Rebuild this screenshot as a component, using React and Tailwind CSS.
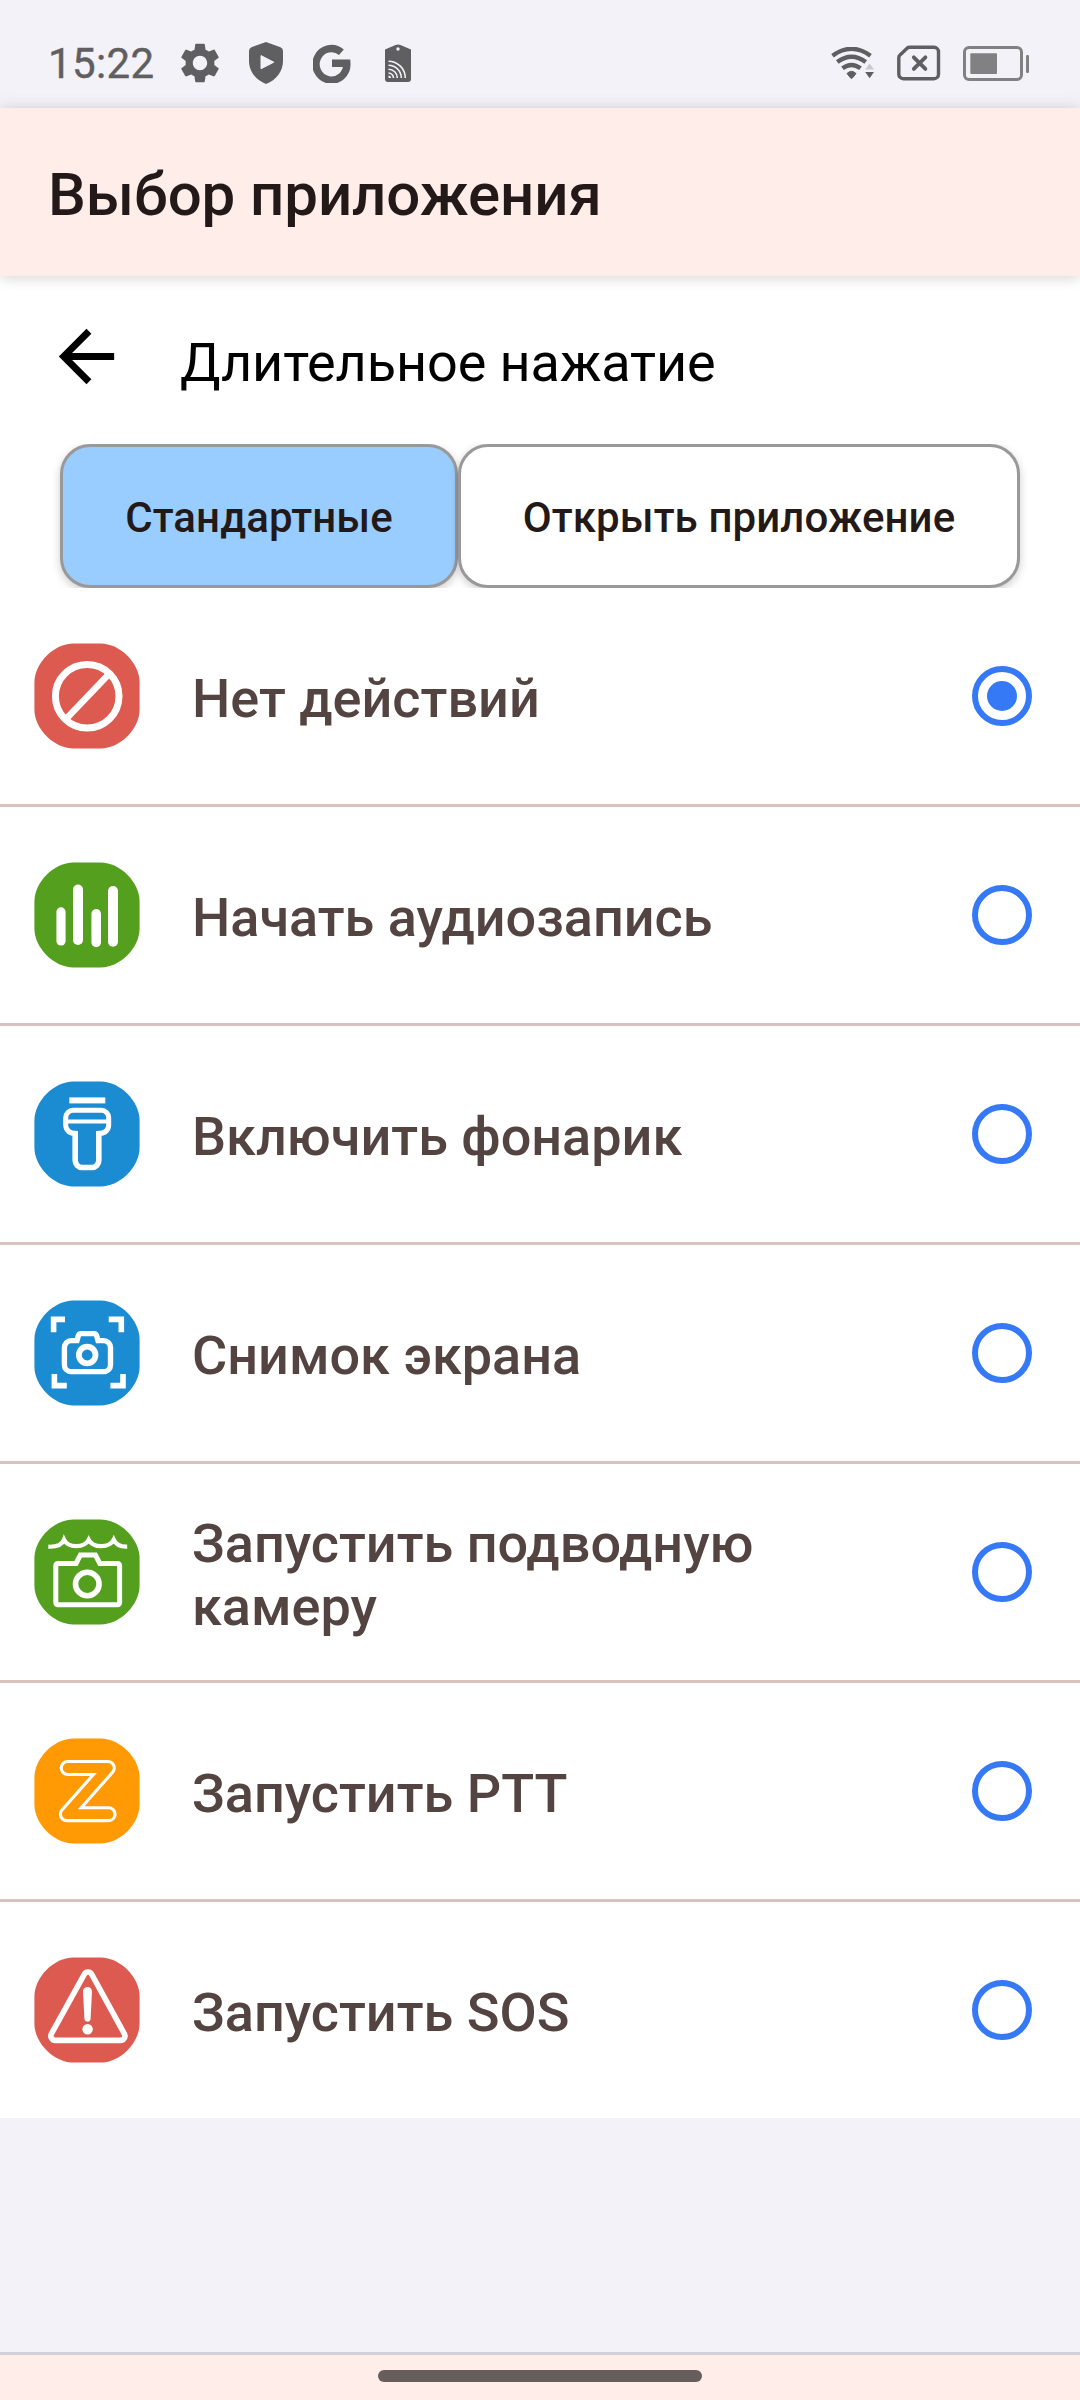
import React, { useState } from 'react';

const ACTIONS = [
  { id: 'none', label: 'Нет действий', icon: NoActionIcon },
  { id: 'audio', label: 'Начать аудиозапись', icon: AudioIcon },
  { id: 'torch', label: 'Включить фонарик', icon: TorchIcon },
  { id: 'screenshot', label: 'Снимок экрана', icon: ScreenshotIcon },
  { id: 'underwater', label: 'Запустить подводную камеру', icon: UnderwaterIcon },
  { id: 'ptt', label: 'Запустить PTT', icon: PttIcon },
  { id: 'sos', label: 'Запустить SOS', icon: SosIcon },
];

const TABS = [
  { id: 'standard', label: 'Стандартные' },
  { id: 'app', label: 'Открыть приложение' },
];

function Tile({ color, children }) {
  return (
    <svg viewBox="0 0 106 106" className="w-[106px] h-[106px] shrink-0" fill="none">
      <path
        d="M39.4.4h27.2C86 .4 105.6 20 105.6 39.4v27.2c0 19.4-19.6 39-39 39H39.4C20 105.6.4 86 .4 66.6V39.4C.4 20 20 .4 39.4.4z"
        fill={color}
      />
      {children}
    </svg>
  );
}

function NoActionIcon() {
  return (
    <Tile color="#dd5a50">
      <g stroke="#fff" strokeWidth="7">
        <circle cx="53.2" cy="53.2" r="31.8" />
        <path d="M75 31L32 76" strokeWidth="6.5" />
      </g>
    </Tile>
  );
}

function AudioIcon() {
  return (
    <Tile color="#549f1e">
      <g fill="#fff">
        <rect x="22.4" y="45.3" width="9.2" height="38.2" rx="4.6" />
        <rect x="39" y="22.5" width="10" height="60.5" rx="5" />
        <rect x="57.4" y="47" width="9.6" height="38.2" rx="4.8" />
        <rect x="74" y="24" width="10" height="60.8" rx="5" />
      </g>
    </Tile>
  );
}

function TorchIcon() {
  return (
    <Tile color="#1b8bd2">
      <rect x="35.3" y="16.4" width="36" height="6" fill="#fff" />
      <g stroke="#fff" strokeWidth="5">
        <path d="M42.5 52.3H40a8.3 8.3 0 0 1-8.3-8.3v-7.3a7.5 7.5 0 0 1 7.5-7.5h28a7.5 7.5 0 0 1 7.5 7.5V44a8.3 8.3 0 0 1-8.3 8.3h-2.6" />
        <path d="M31.5 40.4h43.5" strokeWidth="4" />
        <path d="M41.2 50v29.5a7 7 0 0 0 7 7h9.6a7 7 0 0 0 7-7V50" strokeWidth="5.6" />
      </g>
    </Tile>
  );
}

function ScreenshotIcon() {
  return (
    <Tile color="#1b8bd2">
      <g stroke="#fff" strokeWidth="5.6">
        <path d="M19.6 32.3V19.4H31M74.7 19.4h12.6v12.9M20.4 74v11.6h12.4M76.4 85.6H89V74" />
        <path
          d="M43 40.6l1.4-5c.4-1.4 1-2 2.4-2h13.4c1.4 0 2 .6 2.4 2l1.4 5h5.5a7 7 0 0 1 7 7V65a6.6 6.6 0 0 1-6.6 6.6H37A6.6 6.6 0 0 1 30.4 65V47.6a7 7 0 0 1 7-7z"
          strokeWidth="5.4"
        />
        <circle cx="53.2" cy="55" r="8.3" strokeWidth="5.8" />
      </g>
    </Tile>
  );
}

function UnderwaterIcon() {
  return (
    <Tile color="#549f1e">
      <g stroke="#fff">
        <path
          d="M14.3 27.7C22 28 28 26 30 20.7C34 29.3 50.5 29.3 54.7 20.7C59 29.3 75.5 29.3 79.7 20.7C82 26 86 28 93.2 27.7"
          strokeWidth="4.2"
        />
        <path
          d="M42 44.5l4.4-8.5h15l4.4 8.5H83.6a2 2 0 0 1 2 2v37.3a2 2 0 0 1-2 2H23.8a2 2 0 0 1-2-2V46.5a2 2 0 0 1 2-2z"
          strokeWidth="5"
        />
        <circle cx="53.3" cy="65" r="11.8" strokeWidth="5.6" />
      </g>
    </Tile>
  );
}

function PttIcon() {
  return (
    <Tile color="#ff9a05">
      <g strokeLinecap="round" strokeLinejoin="round">
        <path d="M33.7 30H73.8L32.8 76.2H74.6" stroke="#fff" strokeWidth="16" />
        <path d="M33.7 30H73.8L32.8 76.2H74.6" stroke="#ff9a05" strokeWidth="9.8" />
      </g>
    </Tile>
  );
}

function SosIcon() {
  return (
    <Tile color="#dd5a50">
      <path
        d="M50.3 17.3a4.1 4.1 0 0 1 7.4 0L90.4 76.8a4.5 4.5 0 0 1-4 6.6H21.4a4.5 4.5 0 0 1-4-6.6z"
        stroke="#fff"
        strokeWidth="5.6"
      />
      <path d="M49 34.5a4.5 4.5 0 0 1 9 0L56.6 61.5a3.1 3.1 0 0 1-6.2 0z" fill="#fff" />
      <circle cx="53.6" cy="72.2" r="5.2" fill="#fff" />
    </Tile>
  );
}

function StatusBar() {
  return (
    <div className="h-[108px] pt-[39px] pl-[48px] pr-[50px] flex items-start justify-between text-[#5f5f61]">
      <div className="flex items-center h-12">
        <span className="text-[42px] leading-[48px] tracking-[0.4px] w-[129px] translate-y-px [-webkit-text-stroke:0.4px]">15:22</span>
        {/* Settings */}
        <svg viewBox="2 2 20 20" className="w-[40px] h-[40px] ml-[3px]" fill="currentColor">
          <path d="M19.14 12.94c.04-.3.06-.61.06-.94 0-.32-.02-.64-.07-.94l2.03-1.58c.18-.14.23-.41.12-.61l-1.92-3.32c-.12-.22-.37-.29-.59-.22l-2.39.96c-.5-.38-1.03-.7-1.62-.94l-.36-2.54c-.04-.24-.24-.41-.48-.41h-3.84c-.24 0-.43.17-.47.41l-.36 2.54c-.59.24-1.13.57-1.62.94l-2.39-.96c-.22-.08-.47 0-.59.22L2.74 8.87c-.12.21-.08.47.12.61l2.03 1.58c-.05.3-.09.63-.09.94s.02.64.07.94l-2.03 1.58c-.18.14-.23.41-.12.61l1.92 3.32c.12.22.37.29.59.22l2.39-.96c.5.38 1.03.7 1.62.94l.36 2.54c.05.24.24.41.48.41h3.84c.24 0 .44-.17.47-.41l.36-2.54c.59-.24 1.13-.56 1.62-.94l2.39.96c.22.08.47 0 .59-.22l1.92-3.32c.12-.22.07-.47-.12-.61l-2.01-1.58zM12 15.6c-1.98 0-3.6-1.62-3.6-3.6s1.62-3.6 3.6-3.6 3.6 1.62 3.6 3.6-1.62 3.6-3.6 3.6z" />
        </svg>
        {/* Play Protect */}
        <svg viewBox="0 0 34 42" className="w-[34px] h-[42px] ml-[29px]">
          <path d="M17 0l14.5 5.2Q34 6.2 34 8.7V19C34 29 27.5 38 17 42 6.5 38 0 29 0 19V8.7Q0 6.2 2.5 5.2z" fill="currentColor" />
          <path d="M12 13.6v13.2l12.8-6.6z" fill="#f3f2f9" stroke="#f3f2f9" strokeLinejoin="round" />
        </svg>
        {/* Google */}
        <svg viewBox="0 0 38 39" className="w-[38px] h-[39px] ml-[30px]" fill="none" stroke="currentColor" strokeWidth="7.4">
          <path d="M28.4 8.3A15.4 15.8 0 1 0 33.8 19.3H19" />
        </svg>
        {/* NFC tag */}
        <svg viewBox="0 0 26 38" className="w-[26px] h-[38px] ml-[34px]" fill="none">
          <path d="M0 5.5L10.5 1.1q2.5-1.3 5 0L26 5.5V35a3 3 0 0 1-3 3H3a3 3 0 0 1-3-3z" fill="currentColor" />
          <circle cx="13" cy="5" r="1.7" fill="#f3f2f9" />
          <path
            d="M3.5 17.2a16.8 16.8 0 0 1 16.8 16.8M3.5 21.2a12.8 12.8 0 0 1 12.8 12.8M3.5 25.2a8.8 8.8 0 0 1 8.8 8.8M3.5 29a5 5 0 0 1 5 5"
            stroke="#f3f2f9"
            strokeWidth="1.6"
          />
          <path d="M3.5 34v-2.5a2.5 2.5 0 0 1 2.5 2.5z" fill="#f3f2f9" />
        </svg>
      </div>

      <div className="flex items-center h-12">
        {/* Wi-Fi with traffic arrows */}
        <svg viewBox="0 0 44 32" className="w-[44px] h-[32px]" fill="none">
          <g stroke="currentColor" strokeWidth="4.4">
            <path d="M1.5 8.7Q20.5-5 39.5 8.7" />
            <path d="M6.3 15.1Q20.5 4.5 34.7 15.1" />
            <path d="M11.5 21.3Q20.5 14.5 29.5 21.3" />
          </g>
          <path d="M16 26.5Q20.5 22.2 25 26.5L21.4 31q-.9.8-1.8 0z" fill="currentColor" stroke="currentColor" />
          <path d="M38.6 16.5l4.4 6h-8.8z" fill="#c9c8ce" />
          <path d="M34.2 25h8.8l-4.4 6.3z" fill="currentColor" />
        </svg>
        {/* Missing SIM */}
        <svg viewBox="0 0 44 36" className="w-[44px] h-[36px] ml-[22px]" fill="none" stroke="currentColor" strokeWidth="3.4">
          <path d="M12.5 2.3H37a4.5 4.5 0 0 1 4.5 4.5v22.4a4.5 4.5 0 0 1-4.5 4.5H6.3a4.5 4.5 0 0 1-4.5-4.5V12.5q0-1.3 1-2.2l7.3-7q1-1 2.4-1z" />
          <path d="M16.8 12.3l11.6 11.6m0-11.6L16.8 23.9" strokeWidth="3.8" strokeLinecap="round" />
        </svg>
        {/* Battery */}
        <svg viewBox="0 0 67 35" className="w-[67px] h-[35px] ml-[22px]" fill="none">
          <rect x="1.5" y="1.5" width="57" height="32" rx="4.5" stroke="#818183" strokeWidth="3" />
          <rect x="7.3" y="7.3" width="26.7" height="20.7" rx="1" fill="#818183" />
          <rect x="63" y="9" width="3" height="18" rx="1.2" fill="#818183" />
        </svg>
      </div>
    </div>
  );
}

function Radio({ checked }) {
  return (
    <span className="w-[60px] h-[60px] rounded-full border-[6px] border-[#3679f6] flex items-center justify-center shrink-0">
      {checked && <span className="w-[30px] h-[30px] rounded-full bg-[#3679f6]" />}
    </span>
  );
}

export default function App() {
  const [tab, setTab] = useState('standard');
  const [selected, setSelected] = useState('none');

  return (
    <div className="w-[1080px] h-[2400px] flex flex-col overflow-hidden bg-[#f3f2f9] font-[Roboto,sans-serif]">
      <StatusBar />

      {/* App bar */}
      <header className="relative z-10 h-[168px] shrink-0 pl-12 flex items-center bg-[#ffedea] shadow-[0_4px_12px_rgba(0,0,0,0.06),0_0_16px_rgba(0,0,0,0.12)]">
        <h1 className="text-[60px] leading-[72px] font-medium tracking-[-0.08px] text-[#231918] translate-y-[3px]">Выбор приложения</h1>
      </header>

      <main className="bg-white shrink-0">
        <div className="h-[168px] pl-[45px] flex items-center">
          <button className="w-[84px] h-[84px] -mt-[7px]">
            <svg viewBox="0 0 24 24" className="w-[83px] h-[83px]" fill="#000">
              <path d="M20 11H7.83l5.59-5.59L12 4l-8 8 8 8 1.41-1.41L7.83 13H20v-2z" />
            </svg>
          </button>
          <h2 className="ml-[51px] text-[54px] leading-[64px] tracking-[-0.08px] text-black translate-y-[3px]">Длительное нажатие</h2>
        </div>

        {/* Tabs */}
        <div className="h-[144px] px-[60px] flex overflow-hidden">
          {TABS.map((item) => (
            <button
              key={item.id}
              onClick={() => setTab(item.id)}
              className={`h-[144px] border-[3px] border-[#999] rounded-[30px] text-[42px] leading-[50px] font-medium tracking-[0.1px] text-[#231918] shadow-[0_3px_9px_rgba(0,0,0,0.2)] first:w-[398px] last:flex-1 ${
                tab === item.id ? 'bg-[#99ccff]' : 'bg-white'
              }`}
            >
              <span className="block translate-y-[2px] whitespace-nowrap">{item.label}</span>
            </button>
          ))}
        </div>

        {/* Actions */}
        <ul className="divide-y-[3px] divide-[#d8c2bf]">
          {ACTIONS.map(({ id, label, icon: Icon }) => (
            <li
              key={id}
              onClick={() => setSelected(id)}
              className="box-content h-[216px] pl-[34px] pr-12 flex items-center cursor-pointer"
            >
              <Icon />
              <span className="ml-[52px] w-[620px] min-h-[65px] text-[54px] leading-[63px] font-medium text-[#534341] translate-y-[3px]">
                {label}
              </span>
              <span className="ml-auto">
                <Radio checked={selected === id} />
              </span>
            </li>
          ))}
        </ul>
      </main>

      {/* Gesture bar */}
      <footer className="mt-auto h-12 shrink-0 border-t-[3px] border-[#d2d1d9] bg-[#ffedea] pt-[15px] flex justify-center">
        <div className="w-[324px] h-3 rounded-full bg-[#675d5c]" />
      </footer>
    </div>
  );
}
